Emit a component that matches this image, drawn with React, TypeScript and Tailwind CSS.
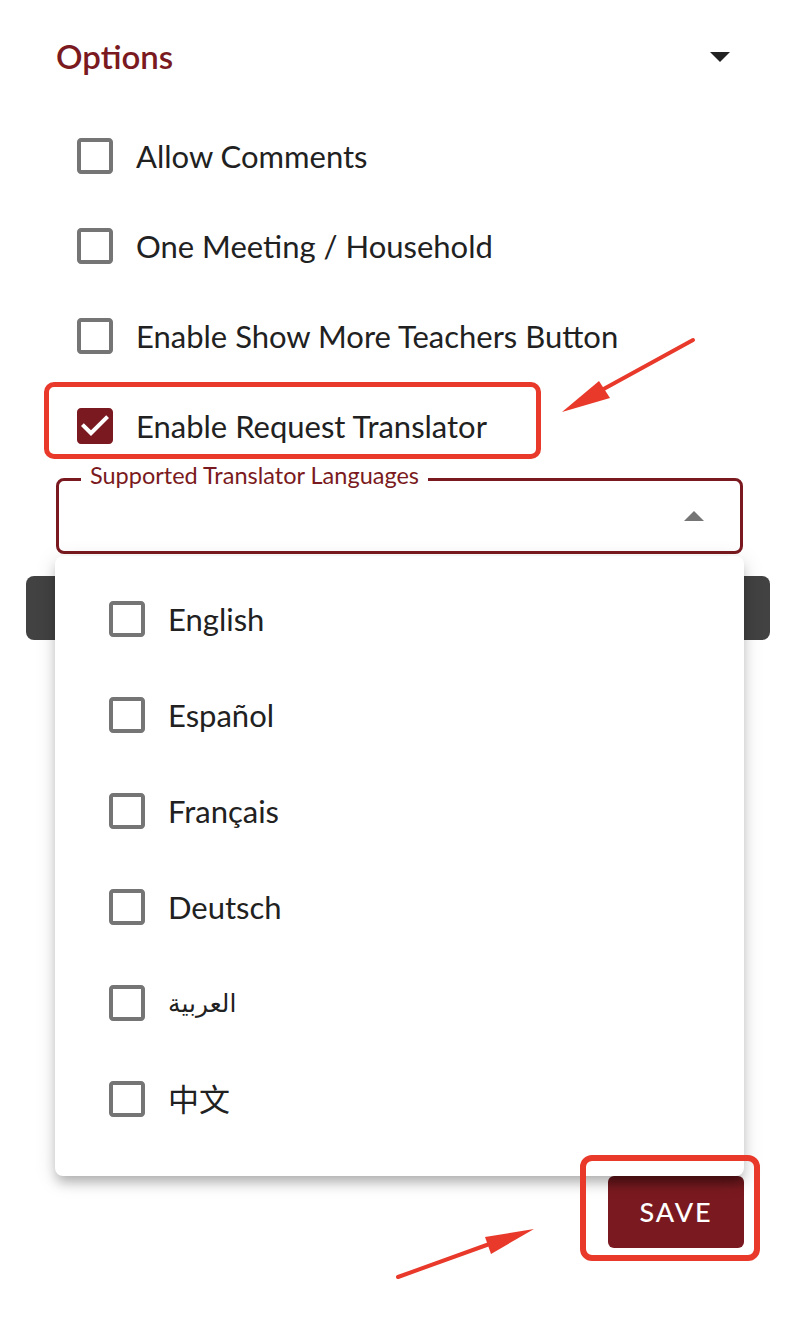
import React from "react";

const MAROON = "#7a1a20";

function Box({ checked = false }: { checked?: boolean }) {
  if (checked) {
    return (
      <svg width="48" height="48" viewBox="0 0 24 24" className="shrink-0">
        <path
          fill={MAROON}
          d="M19 3H5c-1.11 0-2 .9-2 2v14c0 1.1.89 2 2 2h14c1.11 0 2-.9 2-2V5c0-1.1-.89-2-2-2zm-9 14l-5-5 1.41-1.41L10 14.17l7.59-7.59L19 8l-9 9z"
        />
      </svg>
    );
  }
  return (
    <svg width="48" height="48" viewBox="0 0 24 24" className="shrink-0">
      <path
        fill="#757575"
        d="M19 5v14H5V5h14m0-2H5c-1.1 0-2 .9-2 2v14c0 1.1.9 2 2 2h14c1.1 0 2-.9 2-2V5c0-1.1-.9-2-2-2z"
      />
    </svg>
  );
}

const options = [
  { label: "Allow Comments", checked: false },
  { label: "One Meeting / Household", checked: false },
  { label: "Enable Show More Teachers Button", checked: false },
  { label: "Enable Request Translator", checked: true },
];

const languages = ["English", "Español", "Français", "Deutsch", "العربية", "中文"];

export default function App() {
  return (
    <div
      className="relative w-[801px] h-[1323px] overflow-hidden bg-white text-[#212121]"
      style={{ fontFamily: "Lato, 'Noto Sans CJK SC', 'DejaVu Sans', sans-serif" }}
    >
      {/* header */}
      <div className="flex items-center justify-between h-[48px] mt-[33px] pl-[56px] pr-[71px]">
        <span className="text-[33px] font-semibold" style={{ color: MAROON }}>
          Options
        </span>
        <svg width="20" height="10" viewBox="0 0 20 10">
          <path d="M0 0h20L10 10z" fill="#222" />
        </svg>
      </div>

      {/* option checkboxes */}
      <div className="mt-[30px] flex flex-col">
        {options.map((o) => (
          <div key={o.label} className="flex items-center h-[90px] pl-[71px] gap-[17px]">
            <Box checked={o.checked} />
            <span className="text-[31px] leading-none">{o.label}</span>
          </div>
        ))}
      </div>

      {/* select field */}
      <div
        className="relative mt-[7px] ml-[56px] w-[687px] h-[76px] rounded-[8px] border-[3px] flex items-center justify-end pr-[36px]"
        style={{ borderColor: MAROON }}
      >
        <span
          className="absolute left-[22px] top-[-21px] bg-white px-[9px] text-[23.5px] leading-[30px]"
          style={{ color: MAROON }}
        >
          Supported Translator Languages
        </span>
        <svg width="20" height="10" viewBox="0 0 20 10">
          <path d="M0 10h20L10 0z" fill="#757575" />
        </svg>
      </div>

      {/* dark bar partly covered by the menu */}
      <div className="mt-[22px] ml-[26px] w-[744px] h-[64px] rounded-[8px] bg-[#424242]" />

      {/* save */}
      <div className="flex justify-end pr-[57px] mt-[536px]">
        <button
          className="w-[136px] h-[72px] rounded-[6px] text-white text-[27px] font-medium tracking-[0.07em] bg-gradient-to-b from-[#5e1418] from-0% via-[#7a1a20] via-20% to-[#7a1a20]"
        >
          SAVE
        </button>
      </div>

      {/* open menu */}
      <div className="absolute left-[55px] top-[556px] w-[689px] h-[620px] rounded-[8px] bg-white pt-[15px] shadow-[0_8px_12px_-2px_rgba(0,0,0,0.25),0_4px_20px_2px_rgba(0,0,0,0.1)]">
        {languages.map((l) => (
          <div key={l} className="flex items-center h-[96px] pl-[48px] gap-[17px]">
            <Box />
            <span
              className={l === "العربية" ? "text-[25px] leading-none" : "text-[31px] leading-none"}
              style={l === "العربية" ? { fontFamily: "'DejaVu Sans', sans-serif" } : undefined}
            >
              {l}
            </span>
          </div>
        ))}
      </div>

      {/* annotation boxes */}
      <div className="absolute left-[44px] top-[382px] w-[497px] h-[77px] rounded-[10px] border-[5px] border-[#e8392b]" />
      <div className="absolute left-[580px] top-[1155px] w-[180px] h-[106px] rounded-[12px] border-[6px] border-[#e8392b]" />

      {/* annotation arrows */}
      <svg className="absolute inset-0 pointer-events-none" width="801" height="1323" viewBox="0 0 801 1323">
        <path d="M693 340 L600 391" stroke="#e8392b" strokeWidth="4" strokeLinecap="round" />
        <polygon points="562,412 599,381 610,398" fill="#e8392b" />
        <path d="M398 1277 L495 1242" stroke="#e8392b" strokeWidth="4" strokeLinecap="round" />
        <polygon points="534,1229 485,1237 491,1254" fill="#e8392b" />
      </svg>
    </div>
  );
}
